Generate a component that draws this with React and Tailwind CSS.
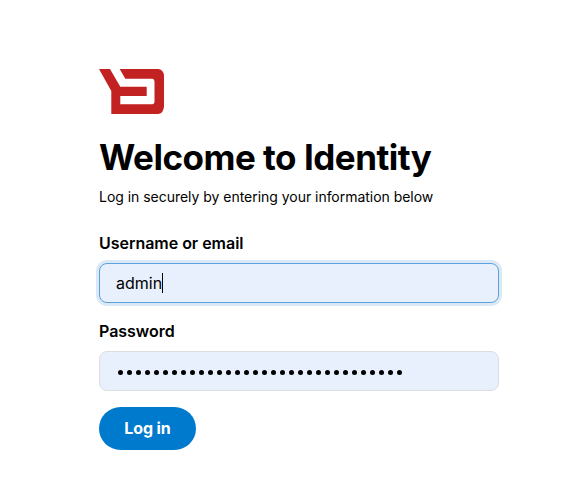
const PASSWORD_LENGTH = 32;

function Logo() {
  return (
    <svg width="65" height="45" viewBox="0 0 65 45" fill="#c32222" aria-hidden="true">
      <path d="M20.7 0H59.5Q65 1 65 7.5V37.5Q64.5 44 59.5 45H12.3V22L0 0H11L21.3 17.7H47.7V27H21.3V35.3H53.5Q55.3 35 55.5 33V12.5Q55.3 9.7 53.5 9.7H26.3Z" />
    </svg>
  );
}

export default function App() {
  return (
    <main className="h-[481px] w-[580px] bg-white pl-[99px] pt-[69px] font-['Inter',sans-serif] text-black">
      <form className="flex w-[400px] flex-col items-start">
        <Logo />
        <h1 className="mt-[21px] whitespace-nowrap text-[35px] font-bold leading-[44px] tracking-[-0.49px]">Welcome to Identity</h1>
        <p className="mt-2 whitespace-nowrap text-sm leading-5 tracking-[-0.03px]">Log in securely by entering your information below</p>
        <label className="mt-[26px] text-base font-semibold leading-5 tracking-[-0.03px]">Username or email</label>
        <div className="mt-[10px] flex h-10 w-full items-center rounded-lg border border-[#5aa2dc] bg-[#e8f0fe] pl-4 text-base ring-3 ring-[#dbe9f6]">
          <span>admin</span>
          <span className="h-5 w-px bg-black" />
        </div>
        <label className="mt-[18px] text-base font-semibold leading-5 tracking-[-0.03px]">Password</label>
        <div className="mt-[10px] flex h-10 w-full items-center gap-1 rounded-lg border border-[#dcdde0] bg-[#e8f0fe] pl-[18px] pt-[2px]">
          {Array.from({ length: PASSWORD_LENGTH }, (_, i) => (
            <span key={i} className="size-[5px] rounded-full bg-black" />
          ))}
        </div>
        <button type="button" className="mt-4 h-[43px] w-[97px] rounded-full bg-[#007acc] pb-[2px] text-base font-bold tracking-[-0.1px] text-white">
          Log in
        </button>
      </form>
    </main>
  );
}
